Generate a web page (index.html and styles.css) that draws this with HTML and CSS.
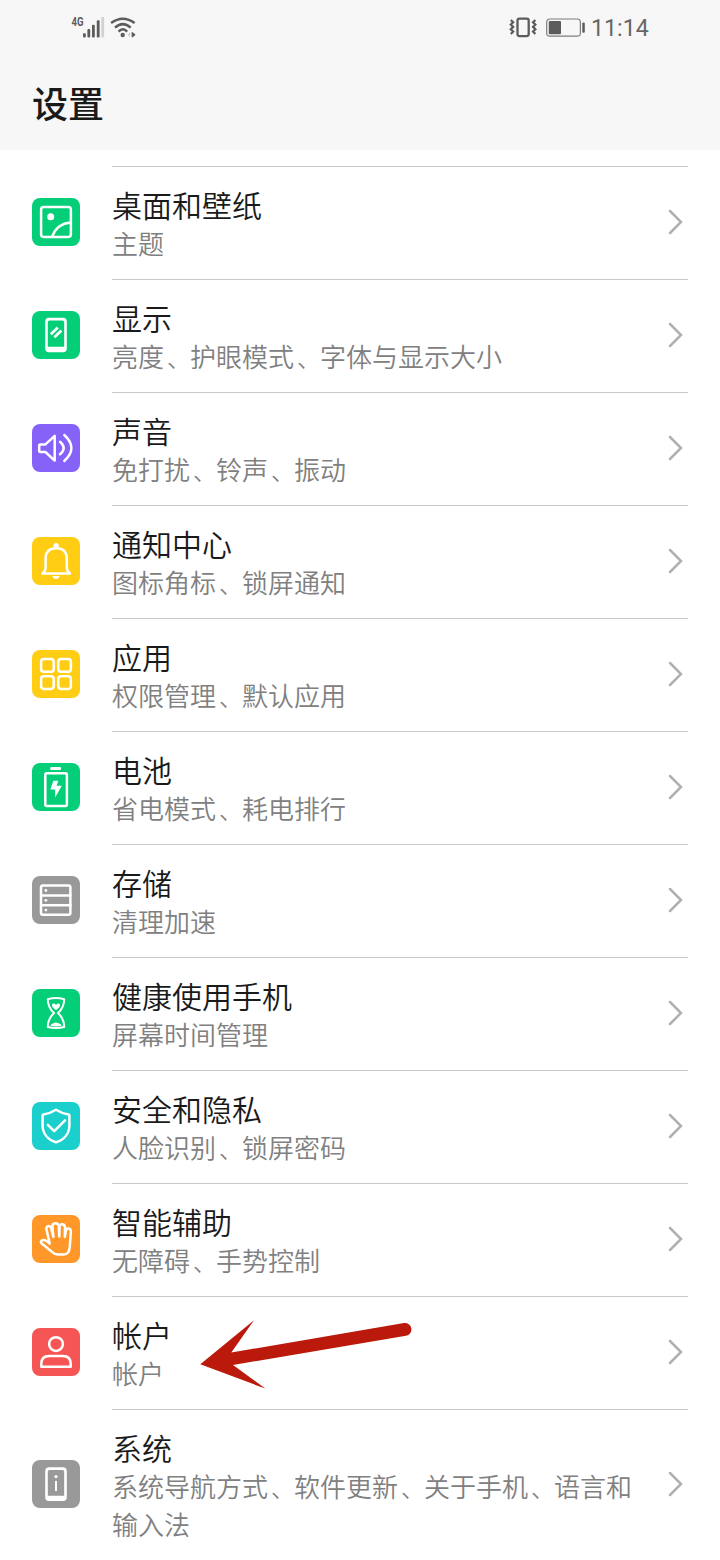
FILE: index.html
```html
<!DOCTYPE html>
<html lang="zh-CN">
<head>
<meta charset="utf-8">
<title>设置</title>
<link rel="stylesheet" href="styles.css">
</head>
<body>
<div class="screen">
  <header class="header">
    <div class="status">
      <svg class="status-left" viewBox="0 0 70 30" fill="#5c5c5c">
        <text class="network" x="1.5" y="16" textLength="12" lengthAdjust="spacingAndGlyphs">4G</text>
        <rect x="13" y="23.3" width="2.8" height="4.2" rx="1"/>
        <rect x="17.4" y="19" width="2.8" height="8.5" rx="1"/>
        <rect x="22" y="14.7" width="2.8" height="12.8" rx="1"/>
        <rect x="26.8" y="10.3" width="2.8" height="17.2" rx="1"/>
        <rect x="31.3" y="7" width="2.8" height="20.5" rx="1" fill="#d2d2d2"/>
        <g fill="none" stroke="#5c5c5c" stroke-width="2.5">
          <path d="M41.1 13.1Q52.8 4.5 64.6 13.1"/>
          <path d="M45 17.6Q52.8 10.6 60.7 17.6"/>
          <path d="M48.6 21.6Q52.8 17 57.2 21.6"/>
        </g>
        <circle cx="52.7" cy="25" r="2.2"/>
        <path d="M61.6 22.2h1.2l2.8 2.5-2.8 2.5h-1.2z"/>
        <path d="M60 22.2l-2.5 2.5 2.5 2.5z" fill="#cfcfcf"/>
      </svg>
      <div class="status-right">
        <svg class="status-icons" viewBox="0 0 80 30" fill="none" stroke="#5c5c5c">
          <rect x="8.5" y="8.7" width="11.2" height="17.4" rx="2" stroke-width="2.3"/>
          <path d="M1.8 10l2.4 2.2-2.4 2.3 2.4 2.4-2.4 2.4 2.4 2.3-2.4 2.4M26.4 10l-2.4 2.2 2.4 2.3-2.4 2.4 2.4 2.4-2.4 2.3 2.4 2.4" stroke-width="2.2"/>
          <rect x="37.7" y="9" width="33.7" height="17.2" rx="3.2" stroke="#7d7d7d" stroke-width="1.2"/>
          <rect x="39.8" y="11" width="12.2" height="13.2" rx="1" fill="#5c5c5c" stroke="none"/>
          <rect x="73.3" y="12.4" width="2.5" height="10.4" rx="1" fill="#5c5c5c" stroke="none"/>
        </svg>
        <span class="time">11:14</span>
      </div>
    </div>
    <h1 class="title">设置</h1>
  </header>

  <main class="list">
    <section class="row">
      <svg class="icon green" viewBox="0 0 48 48"><rect x="9.1" y="9.1" width="29.8" height="29.8" rx="2.6"/><circle class="solid" cx="18.7" cy="18.8" r="3.5"/><path d="M20.2 38.5Q25 25.5 38.7 24.4"/></svg>
      <div class="body"><div class="text"><h2>桌面和壁纸</h2><p>主题</p></div><svg class="chevron" viewBox="0 0 20 27"><path d="M2 2L13 13L2 24"/></svg></div>
    </section>
    <section class="row">
      <svg class="icon green" viewBox="0 0 48 48"><path class="solid cut" d="M17 6.8h14q3.8 0 3.8 3.8v26.8q0 3.8-3.8 3.8h-14q-3.8 0-3.8-3.8v-26.8q0-3.8 3.8-3.8zM17.6 9.6q-1.8 0-1.8 1.8v24.4h16.4v-24.4q0-1.8-1.8-1.8z"/><path class="thick" d="M18.8 23.2l7-6.6M22.4 26.2l7-6.6"/></svg>
      <div class="body"><div class="text"><h2>显示</h2><p>亮度<span class="sep">、</span>护眼模式<span class="sep">、</span>字体与显示大小</p></div><svg class="chevron" viewBox="0 0 20 27"><path d="M2 2L13 13L2 24"/></svg></div>
    </section>
    <section class="row">
      <svg class="icon purple" viewBox="0 0 48 48"><path d="M8.2 20.4h5.2l9.3-8.6v24.8l-9.3-8.6h-5.2q-1 0-1-1v-5.6q0-1 1-1zM28 17.7Q35.4 24 28 30.2M32.3 11Q46.5 24 32.3 37"/></svg>
      <div class="body"><div class="text"><h2>声音</h2><p>免打扰<span class="sep">、</span>铃声<span class="sep">、</span>振动</p></div><svg class="chevron" viewBox="0 0 20 27"><path d="M2 2L13 13L2 24"/></svg></div>
    </section>
    <section class="row">
      <svg class="icon yellow" viewBox="0 0 48 48"><path d="M10.5 36.4h27.5M11 35.8q2.6-1.6 2.6-5.5v-8.4q0-10.6 10.6-10.6t10.6 10.6v8.4q0 3.9 2.6 5.5"/><circle class="solid" cx="24.2" cy="8.7" r="2.6"/><path class="solid" d="M20.3 39h7.4q-1 3-3.7 3t-3.7-3z"/></svg>
      <div class="body"><div class="text"><h2>通知中心</h2><p>图标角标<span class="sep">、</span>锁屏通知</p></div><svg class="chevron" viewBox="0 0 20 27"><path d="M2 2L13 13L2 24"/></svg></div>
    </section>
    <section class="row">
      <svg class="icon yellow" viewBox="0 0 48 48"><rect x="9.1" y="9.1" width="12.6" height="12.6" rx="2.8"/><rect x="26.3" y="9.1" width="12.6" height="12.6" rx="2.8"/><rect x="9.1" y="26.3" width="12.6" height="12.6" rx="2.8"/><rect x="26.3" y="26.3" width="12.6" height="12.6" rx="2.8"/></svg>
      <div class="body"><div class="text"><h2>应用</h2><p>权限管理<span class="sep">、</span>默认应用</p></div><svg class="chevron" viewBox="0 0 20 27"><path d="M2 2L13 13L2 24"/></svg></div>
    </section>
    <section class="row">
      <svg class="icon green" viewBox="0 0 48 48"><rect class="solid" x="18.2" y="4" width="10.8" height="2.9" rx="1"/><rect x="13.3" y="10.3" width="21.6" height="32.6" rx="1.4"/><path class="solid" d="M21.4 17.8h4.9l-1.6 5h5.1l-6.7 11.6v-7.9h-4.8z"/></svg>
      <div class="body"><div class="text"><h2>电池</h2><p>省电模式<span class="sep">、</span>耗电排行</p></div><svg class="chevron" viewBox="0 0 20 27"><path d="M2 2L13 13L2 24"/></svg></div>
    </section>
    <section class="row">
      <svg class="icon gray" viewBox="0 0 48 48"><rect x="9" y="9.5" width="29.4" height="29.2" rx="2"/><path d="M9 19.4h29.4M9 29.2h29.4"/><circle class="solid" cx="13.9" cy="14.5" r="1.4"/><circle class="solid" cx="13.9" cy="24.3" r="1.4"/><circle class="solid" cx="13.9" cy="34.1" r="1.4"/></svg>
      <div class="body"><div class="text"><h2>存储</h2><p>清理加速</p></div><svg class="chevron" viewBox="0 0 20 27"><path d="M2 2L13 13L2 24"/></svg></div>
    </section>
    <section class="row">
      <svg class="icon green" viewBox="0 0 48 48"><path class="fine" d="M15.8 10.2q8.2-2.2 16.4 0c0 7.2-2.6 10.6-6.3 13.9 3.7 3.3 6.3 6.7 6.3 13.9q-8.2 2.2-16.4 0c0-7.2 2.6-10.6 6.3-13.9-3.7-3.3-6.3-6.7-6.3-13.9z"/><path class="solid" d="M24 21c-5.6-3.4-4.4-6.8-2-6.4q1.3.1 2 1.3.7-1.2 2-1.3c2.4-.4 3.6 3-2 6.4zM18.2 36.8q1-2.2 3.5-2.5 2.3-1.8 4.6 0 2.5.3 3.5 2.5-5.8 1.2-11.6 0z"/></svg>
      <div class="body"><div class="text"><h2>健康使用手机</h2><p>屏幕时间管理</p></div><svg class="chevron" viewBox="0 0 20 27"><path d="M2 2L13 13L2 24"/></svg></div>
    </section>
    <section class="row">
      <svg class="icon cyan" viewBox="0 0 48 48"><path d="M24 7.8q5.6 3.7 12.6 4.6.8.2.8 1v9.8c0 8-5 14.4-13.4 17.1-8.4-2.7-13.4-9.1-13.4-17.1v-9.8q0-.8.8-1 7-.9 12.6-4.6z"/><path d="M15.8 22.8l6.4 6.4 10.8-10.8"/></svg>
      <div class="body"><div class="text"><h2>安全和隐私</h2><p>人脸识别<span class="sep">、</span>锁屏密码</p></div><svg class="chevron" viewBox="0 0 20 27"><path d="M2 2L13 13L2 24"/></svg></div>
    </section>
    <section class="row">
      <svg class="icon orange" viewBox="0 0 48 48"><path d="M17.7 28.6L14.5 14.5Q14 11.6 16 11.1T19 13L21.4 21.8L20.4 11.8Q20.3 8.4 23.2 8.2T26.7 11.2L27.3 21.5L27.6 11.7Q27.8 9 30.2 9.2T33 12L32.8 22L34 15.6Q34.6 13.2 36.7 13.5T38.9 16.5L37.8 31.5Q37.4 39.5 31.8 39.5H25.8Q22.4 39.5 20.2 37L9.4 28.2Q8.2 26.7 9.8 25.5Q12.5 23.7 17.7 28.6"/></svg>
      <div class="body"><div class="text"><h2>智能辅助</h2><p>无障碍<span class="sep">、</span>手势控制</p></div><svg class="chevron" viewBox="0 0 20 27"><path d="M2 2L13 13L2 24"/></svg></div>
    </section>
    <section class="row">
      <svg class="icon red" viewBox="0 0 48 48"><circle cx="24" cy="16.1" r="6.9"/><path d="M9.3 38.8v-3q0-7.8 7.8-7.8h13.8q7.8 0 7.8 7.8v3z"/></svg>
      <div class="body"><div class="text"><h2>帐户</h2><p>帐户</p></div><svg class="chevron" viewBox="0 0 20 27"><path d="M2 2L13 13L2 24"/></svg></div>
      <svg class="arrow" viewBox="0 0 230 90"><path d="M10.3 54.3L64 10.2L41.3 42.6L214 13A6.4 6.4 0 0 1 216 25.7L43 55L75.3 78.6Z"/></svg>
    </section>
    <section class="row">
      <svg class="icon gray" viewBox="0 0 48 48"><path class="solid cut" d="M17 7.2h14q3.8 0 3.8 3.8v26.2q0 3.8-3.8 3.8h-14q-3.8 0-3.8-3.8v-26.2q0-3.8 3.8-3.8zM17.6 10q-1.8 0-1.8 1.8v24h16.4v-24q0-1.8-1.8-1.8z"/><circle class="solid" cx="24" cy="16.6" r="1.6"/><path class="fine" d="M24 21.8v8.4"/></svg>
      <div class="body"><div class="text"><h2>系统</h2><p>系统导航方式<span class="sep">、</span>软件更新<span class="sep">、</span>关于手机<span class="sep">、</span>语言和输入法</p></div><svg class="chevron" viewBox="0 0 20 27"><path d="M2 2L13 13L2 24"/></svg></div>
    </section>
  </main>
</div>
</body>
</html>
```

FILE: styles.css
```css
* { box-sizing: border-box; margin: 0; padding: 0; }

body {
  background: #fff;
  color: #1a1a1a;
  font-family: "Noto Sans CJK SC", sans-serif;
}

svg { display: block; flex: none; }

.screen { width: 720px; height: 1560px; overflow: hidden; }

.header { height: 150px; background: #f7f7f7; }

.status {
  display: flex;
  justify-content: space-between;
  height: 56px;
  padding: 9px 70px 0;
}

.status-left { width: 70px; height: 30px; margin-top: 1px; }

.network { font: bold 12px Roboto, sans-serif; }

.status-right { display: flex; }

.status-icons { width: 80px; height: 30px; margin-top: 1px; }

.time {
  width: 61px;
  padding-left: 2px;
  color: #666;
  font: 23.2px/38px Roboto, sans-serif;
  white-space: nowrap;
}

.title {
  padding-left: 32px;
  font-size: 36px;
  font-weight: 500;
  line-height: 92px;
}

.list { padding-top: 16px; }

.row {
  position: relative;
  display: flex;
  align-items: center;
  gap: 32px;
  padding: 0 32px 1px;
}

.body {
  display: flex;
  flex: 1;
  align-items: center;
  border-top: 1px solid #c9c9c9;
}

.text { flex: 1; padding: 17px 0 16px; margin-right: 24px; }

.text h2 { font-size: 30px; font-weight: 350; line-height: 40px; }

.text p { color: #808080; font-size: 26px; font-weight: 350; line-height: 38px; }

/* Separator comma: smaller glyph plus its margin fill one 26px cell */
.sep { margin-left: 3px; font-size: 23px; line-height: 1; }

.chevron {
  width: 20px;
  height: 27px;
  fill: none;
  stroke: #b0b0b0;
  stroke-width: 2.5;
  stroke-linecap: round;
}

.icon {
  width: 48px;
  height: 48px;
  border-radius: 8px;
  fill: none;
  stroke: #fff;
  stroke-width: 2.5;
  stroke-linecap: round;
  stroke-linejoin: round;
}

.icon .solid { fill: #fff; stroke: none; }
.icon .cut { fill-rule: evenodd; }
.icon .thick { stroke-width: 2.8; stroke-linecap: butt; }
.icon .fine { stroke-width: 2; }

.green { background: #05ce78; }
.purple { background: #8662f8; }
.yellow { background: #ffcd14; }
.gray { background: #999; }
.cyan { background: #1bcfcc; }
.orange { background: #ff9828; }
.red { background: #f55555; }

/* Pointer drawn over the account row */
.arrow {
  position: absolute;
  top: 14px;
  left: 190px;
  width: 230px;
  height: 90px;
  fill: #bb190b;
}
```
